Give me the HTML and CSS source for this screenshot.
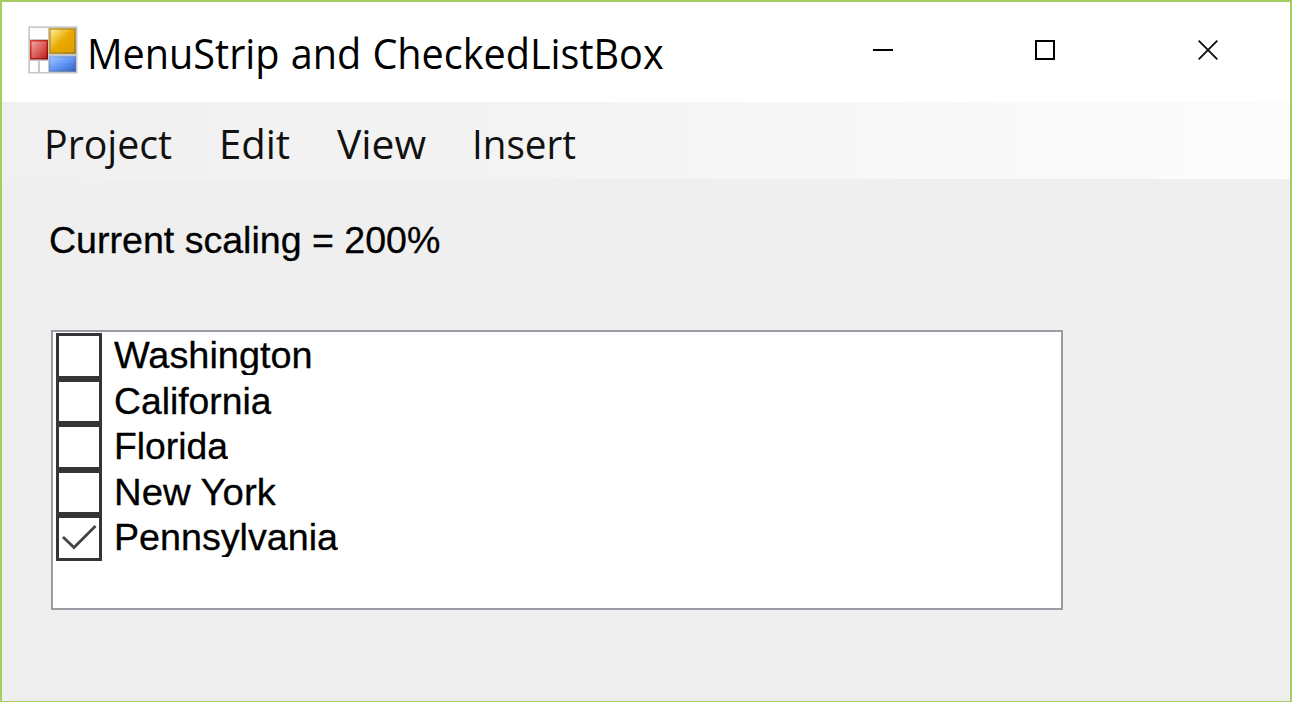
FILE: index.html
```html
<!DOCTYPE html>
<html lang="en">
<head>
<meta charset="utf-8">
<title>MenuStrip and CheckedListBox</title>
<link rel="stylesheet" href="styles.css">
</head>
<body>
<div class="window">
  <header class="titlebar">
    <svg class="app-icon" width="50" height="48" viewBox="0 0 50 48">
      <defs>
        <linearGradient id="gold" x1="0" y1="0" x2="1" y2="1"><stop offset="0" stop-color="#fff0a0"/><stop offset=".5" stop-color="#e9a900"/><stop offset="1" stop-color="#e0a000"/></linearGradient>
        <linearGradient id="red" x1="0" y1="0" x2="1" y2="1"><stop offset="0" stop-color="#f6aaa4"/><stop offset="1" stop-color="#c01818"/></linearGradient>
        <linearGradient id="blue" x1="0" y1="0" x2="1" y2="1"><stop offset="0" stop-color="#a3c4ff"/><stop offset=".5" stop-color="#6298f8"/><stop offset="1" stop-color="#3262c0"/></linearGradient>
        <linearGradient id="goldEdge" x1="0" y1="0" x2="1" y2="1"><stop offset="0" stop-color="#d0a428"/><stop offset="1" stop-color="#a07810"/></linearGradient>
        <linearGradient id="redEdge" x1="0" y1="0" x2="1" y2="1"><stop offset="0" stop-color="#d84030"/><stop offset="1" stop-color="#8c0808"/></linearGradient>
        <linearGradient id="blueEdge" x1="0" y1="0" x2="1" y2="1"><stop offset="0" stop-color="#84acee"/><stop offset="1" stop-color="#4068b0"/></linearGradient>
      </defs>
      <rect x=".3" y=".3" width="49.200" height="47.200" fill="#c8c8c8"/>
      <path d="M2 2h18v11H2zM2 35h8v11H2zM12 35h8v11h-8z" fill="#fff"/>
      <rect x="2.75" y="14.75" width="16.5" height="18" fill="url(#red)" stroke="url(#redEdge)" stroke-width="1.5"/>
      <rect x="22" y="3" width="25" height="24" fill="url(#gold)" stroke="url(#goldEdge)" stroke-width="1.6"/>
      <rect x="21.75" y="31" width="25.5" height="14" fill="url(#blue)" stroke="url(#blueEdge)" stroke-width="1.5"/>
    </svg>
    <h1 class="title">MenuStrip and CheckedListBox</h1>
    <div class="controls">
      <svg width="20" height="20" viewBox="0 0 20 20"><path d="M0 10h20" stroke="#000" stroke-width="2"/></svg>
      <svg width="20" height="20" viewBox="0 0 20 20"><rect x="1" y="1" width="18" height="18" fill="none" stroke="#000" stroke-width="2"/></svg>
      <svg class="close" width="20" height="20" viewBox="0 0 20 20"><path d="M.7.7l18.6 18.6M19.3.7L.7 19.3" stroke="#101014" stroke-width="1.9"/></svg>
    </div>
  </header>
  <nav class="menu">
    <span class="project">Project</span><span class="edit">Edit</span><span class="view">View</span><span class="insert">Insert</span>
  </nav>
  <main class="client">
    <p class="scaling">Current scaling = 200%</p>
    <ul class="list">
      <li><i class="box"></i><span class="label wide">Washington</span></li>
      <li><i class="box"></i><span class="label">California</span></li>
      <li><i class="box"></i><span class="label">Florida</span></li>
      <li><i class="box"></i><span class="label wider">New York</span></li>
      <li><i class="box"><svg width="39" height="39" viewBox="0 0 39 39"><path d="M4 19l11 10.500L36.500 8" fill="none" stroke="#444" stroke-width="2.8"/></svg></i><span class="label penn">Pennsylvania</span></li>
    </ul>
  </main>
</div>
</body>
</html>
```
FILE: styles.css
```css
* { box-sizing: border-box; }
body { margin: 0; }
.window {
  width: 1292px;
  height: 702px;
  border: 2px solid #a5cd61;
  border-bottom-width: 1px;
  background: #efefef;
  overflow: hidden;
  color: #000;
}
.titlebar {
  height: 100px;
  display: flex;
  align-items: flex-start;
  background: #fff;
  padding: 24px 72px 0 26px;
}
.app-icon { flex: none; }
.title {
  margin: -1px 0 0 9px;
  font: 400 42px/56px "Open Sans", sans-serif;
  white-space: nowrap;
  word-spacing: 1px;
  transform: scaleX(.942);
  transform-origin: 0 50%;
}
.controls {
  margin: 14px 0 0 auto;
  display: flex;
  gap: 142px;
}
.controls svg { display: block; }
.controls .close { margin-left: 1px; }
.menu {
  height: 77px;
  display: flex;
  padding: 14px 0 0 42px;
  background: linear-gradient(90deg, #f0f0f0, #f4f4f4 45%, #fcfcfc);
  font: 400 40px/56px "Open Sans", sans-serif;
  color: #111;
}
.menu span { transform-origin: 0 50%; white-space: nowrap; }
.project { width: 175px; transform: scaleX(.982); }
.edit { width: 118px; }
.view { width: 135px; transform: scaleX(1.02); }
.insert { transform: scaleX(.965); }
.client {
  padding: 41px 0 0 47px;
  font: 400 36px/42px "Liberation Sans", sans-serif;
  -webkit-text-stroke: .3px #000;
}
.scaling {
  margin: 0;
  height: 110px;
  width: 400px;
  white-space: nowrap;
  transform: scaleX(1.043);
  transform-origin: 0 50%;
}
.list {
  margin: 0 0 0 2px;
  padding: 1px 3px;
  width: 1012px;
  height: 280px;
  list-style: none;
  background: #fff;
  border: 2px solid #9a9ca4;
}
.list li { display: flex; height: 45.5px; }
.box {
  flex: none;
  width: 46px;
  height: 45.5px;
  border: 3px solid #353535;
}
.box svg { display: block; }
.label {
  margin: 2px 0 0 12px;
  height: 40px;
  overflow: hidden;
  white-space: nowrap;
  transform: scaleX(1.036);
  transform-origin: 0 50%;
}
.label.wide { transform: scaleX(1.052); }
.label.wider { transform: scaleX(1.064); }
.label.penn { transform: scaleX(1.046); }
```
